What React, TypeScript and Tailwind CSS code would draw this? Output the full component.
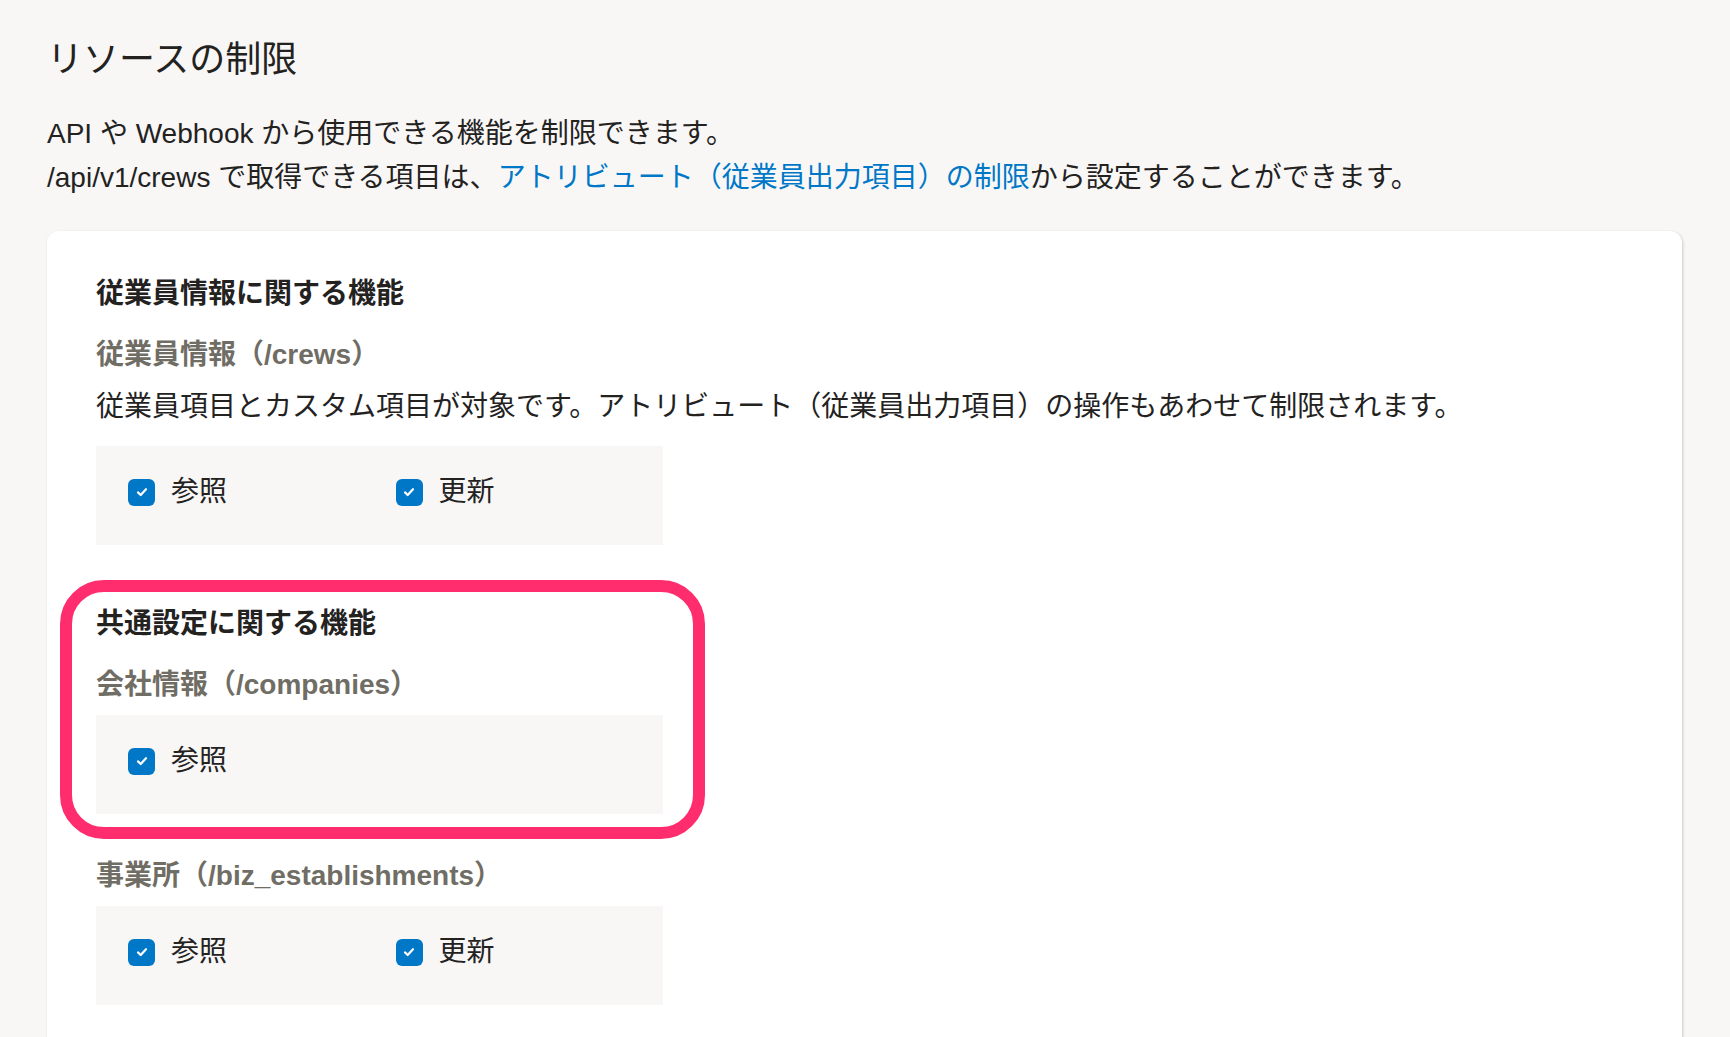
import React from 'react'

type Option = {
  label: string
}

type Resource = {
  title: string
  description?: string
  options: Option[]
}

const FONT = { fontFamily: '"Liberation Sans", "Noto Sans CJK JP", sans-serif' }

function CheckIcon() {
  return (
    <span className="flex h-[27px] w-[27px] flex-shrink-0 items-center justify-center rounded-[6px] bg-[#0077c7]">
      <svg width="14" height="14" viewBox="0 0 14 14" fill="none">
        <path
          d="M3 7.4 L5.7 10 L11 4.2"
          stroke="white"
          strokeWidth="2.2"
          strokeLinecap="round"
          strokeLinejoin="round"
        />
      </svg>
    </span>
  )
}

function OptionBox({ options }: { options: Option[] }) {
  return (
    <div className="flex w-[567px] bg-[#f8f7f6] pl-[32px] pt-[24px] pb-[31px]">
      {options.map((option) => (
        <label key={option.label} className="flex w-[268px] items-center gap-[16px] leading-[44px]">
          <CheckIcon />
          <span>{option.label}</span>
        </label>
      ))}
    </div>
  )
}

function ResourceBlock({ resource }: { resource: Resource }) {
  return (
    <div>
      <p className="font-bold leading-[44px] text-[#706d65]">{resource.title}</p>
      {resource.description && <p className="mt-[8px] leading-[44px]">{resource.description}</p>}
      <div className={resource.description ? 'mt-[17px]' : 'mt-[8px]'}>
        <OptionBox options={resource.options} />
      </div>
    </div>
  )
}

const READ_UPDATE: Option[] = [{ label: '参照' }, { label: '更新' }]

export default function App(): JSX.Element {
  return (
    <div
      className="min-h-screen bg-[#f8f7f6] pl-[47px] pr-[48px] pt-[33px] text-[28px] text-[#23221f]"
      style={FONT}
    >
      <h1 className="text-[36px] leading-[54px]">リソースの制限</h1>
      <div className="mt-[25px] leading-[44px]">
        <p>API や Webhook から使用できる機能を制限できます。</p>
        <p>
          /api/v1/crews で取得できる項目は、
          <a className="text-[#0077c7]">アトリビュート（従業員出力項目）の制限</a>
          から設定することができます。
        </p>
      </div>

      <div className="mt-[31px] rounded-[12px] bg-white pl-[49px] pt-[41px] pb-[60px] shadow-[1px_1px_3px_rgba(0,0,0,0.18)]">
        <h2 className="font-bold leading-[44px]">従業員情報に関する機能</h2>
        <div className="mt-[17px]">
          <ResourceBlock
            resource={{
              title: '従業員情報（/crews）',
              description:
                '従業員項目とカスタム項目が対象です。アトリビュート（従業員出力項目）の操作もあわせて制限されます。',
              options: READ_UPDATE,
            }}
          />
        </div>

        <div className="relative mt-[57px] w-[567px]">
          <h2 className="font-bold leading-[44px]">共通設定に関する機能</h2>
          <div className="mt-[17px]">
            <ResourceBlock resource={{ title: '会社情報（/companies）', options: [{ label: '参照' }] }} />
          </div>
          {/* annotation frame */}
          <div className="pointer-events-none absolute -top-[22px] -bottom-[25px] -left-[36px] -right-[42px] rounded-[44px] border-[12px] border-[#ff2d6e]" />
        </div>

        <div className="mt-[40px]">
          <ResourceBlock resource={{ title: '事業所（/biz_establishments）', options: READ_UPDATE }} />
        </div>
      </div>
    </div>
  )
}
